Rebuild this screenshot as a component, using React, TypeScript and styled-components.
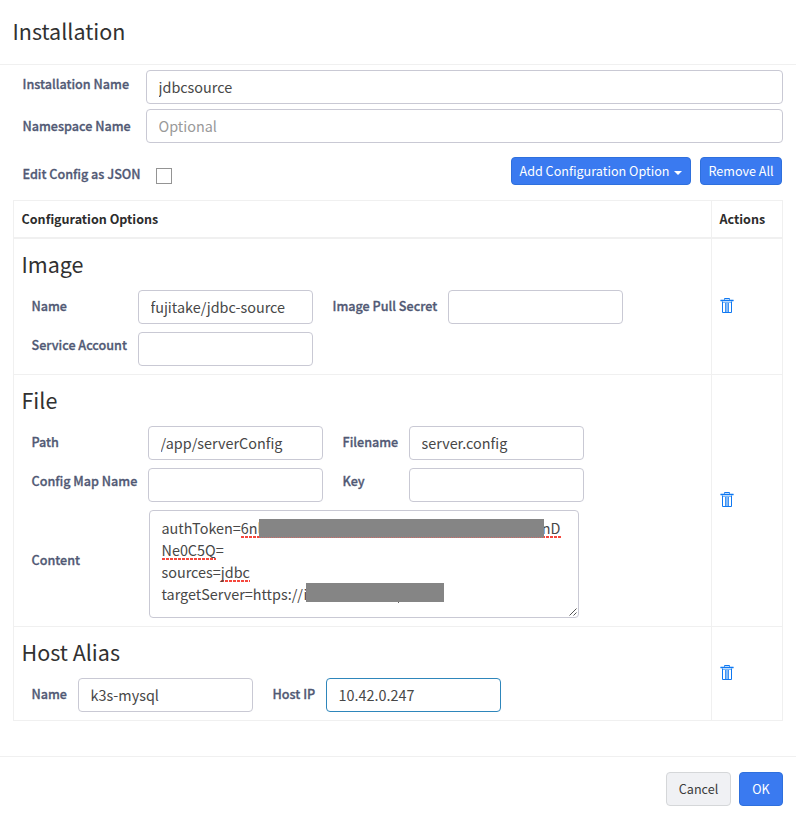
import React from "react";
import styled, { createGlobalStyle } from "styled-components";

const GlobalStyle = createGlobalStyle`
  * { box-sizing: border-box; }
  body {
    margin: 0;
    background: #fff;
    color: #313131;
    font-family: "Noto Sans CJK SC", "Noto Sans", sans-serif;
    font-size: 14.4px;
  }
`;

const Dialog = styled.main`
  width: 796px;
  height: 820px;
  display: flex;
  flex-direction: column;
  overflow: hidden;
`;

const Header = styled.header`
  height: 65px;
  padding: 13px 12.5px 0;
  border-bottom: 1px solid #f0f0f0;
`;

const Title = styled.h4`
  margin: 0;
  font-size: 21.5px;
  font-weight: 400;
  line-height: 36px;
`;

const Body = styled.section`
  height: 691px;
  padding: 5px 13px 0;
`;

const Field = styled.div`
  display: grid;
  grid-template-columns: 133px 1fr;
  height: 34px;
  margin-bottom: 5px;
`;

const Label = styled.label<{ $lift?: number }>`
  padding-left: 9.5px;
  padding-bottom: ${(p) => (p.$lift ?? 1) * 2}px;
  align-self: center;
  font-size: 12.6px;
  font-weight: 500;
  -webkit-text-stroke: 0.3px #515974;
  line-height: 20px;
  color: #515974;
  white-space: nowrap;
`;

const Input = styled.input<{ $active?: boolean }>`
  width: 100%;
  min-width: 0;
  height: 34px;
  padding: 0 11.5px 1px;
  border: 1px solid ${(p) => (p.$active ? "#2e86bb" : "#c9c9d4")};
  border-radius: 4px;
  outline: none;
  background: #fff;
  color: #474747;
  font: inherit;
  &::placeholder { color: #999; opacity: 1; }
`;

const Toolbar = styled.div`
  display: flex;
  align-items: flex-start;
  height: 43px;
  margin-top: 14px;
`;

const CheckLabel = styled(Label)`
  width: 143px;
  align-self: flex-start;
  margin-top: 7px;
`;

const Checkbox = styled.input`
  appearance: none;
  width: 16px;
  height: 16px;
  margin: 11px auto 0 0;
  border: 1px solid #949494;
  background: #fff;
`;

const Button = styled.button<{ $kind?: "small" | "plain" }>`
  display: flex;
  align-items: center;
  justify-content: center;
  height: ${(p) => (p.$kind === "small" ? 28 : 34)}px;
  padding: 0 0 2px;
  border: 1px solid ${(p) => (p.$kind === "plain" ? "#d5d7d9" : "#2f70dd")};
  border-radius: 4px;
  background: ${(p) => (p.$kind === "plain" ? "#f0f1f4" : "#3a7af0")};
  color: ${(p) => (p.$kind === "plain" ? "#3a3a3a" : "#fff")};
  font: inherit;
  font-size: 12.6px;
  white-space: nowrap;
`;

const AddButton = styled(Button)`
  width: 180px;
  margin-right: 9px;
`;
const RemoveButton = styled(Button)`
  width: 82px;
  margin-right: 1px;
`;

const Caret = styled.span`
  margin: 5px 0 0 5px;
  border: 4px solid transparent;
  border-top-color: #fff;
  border-bottom: 0;
`;

const Table = styled.div`
  border: 1px solid #f0f0f0;
`;

const Row = styled.div<{ $head?: boolean }>`
  display: grid;
  grid-template-columns: 697px 1fr;
  border-bottom: ${(p) => (p.$head ? 2 : 1)}px solid #f0f0f0;
  &:last-child { border-bottom: 0; }
`;

const HeadCell = styled.div`
  height: 36px;
  padding: 0 7.5px;
  font-size: 12.55px;
  font-weight: 700;
  line-height: 36px;
  color: #2c2c2c;
  & + & { border-left: 1px solid #f0f0f0; }
`;

const OptionCell = styled.div`
  padding: 8px;
`;

const ActionCell = styled.div`
  display: flex;
  align-items: center;
  padding: 0 0 3px 8px;
  border-left: 1px solid #f0f0f0;
`;

const IconButton = styled.button`
  display: flex;
  padding: 0;
  border: 0;
  background: none;
`;

const OptionTitle = styled(Title)`
  height: 44px;
  margin: -1px 0 0 -0.5px;
`;

const Form = styled.div<{ $columns: string }>`
  display: grid;
  grid-template-columns: ${(p) => p.$columns};
  row-gap: 8px;
`;

const NextLabel = styled(Label)`
  padding-left: 19.5px;
`;

const TextBox = styled.div`
  position: relative;
  grid-column: 2 / -1;
  width: 430px;
  height: 108px;
  margin-left: 1px;
  padding: 6px 11.5px;
  border: 1px solid #c9c9d4;
  border-radius: 4px;
  line-height: 22px;
  color: #474747;
`;

const Line = styled.div`
  display: flex;
  white-space: nowrap;
`;

const Misspelt = styled.span`
  height: 21px;
  background: radial-gradient(circle at 1.5px 1px, #f5473d 1.2px, transparent 1.9px) 0 100% / 4px 2px repeat-x;
`;

const LineEnd = styled(Misspelt)`
  margin-left: auto;
  margin-right: 6px;
`;

const Redaction = styled.span<{ $x: number; $y: number; $w: number; $marked?: boolean }>`
  position: absolute;
  left: ${(p) => p.$x}px;
  top: ${(p) => p.$y}px;
  width: ${(p) => p.$w}px;
  height: 19px;
  background: #858585;
  border-bottom: ${(p) => (p.$marked ? "1px dotted #d06f6b" : "0")};
`;

const Descender = styled.span`
  position: absolute;
  left: 248px;
  top: 91px;
  width: 1px;
  height: 1px;
  background: #666;
`;

const Grip = styled.svg`
  position: absolute;
  right: 1px;
  bottom: 1px;
`;

const Footer = styled.footer`
  display: flex;
  justify-content: flex-end;
  gap: 8px;
  height: 64px;
  padding: 15px 13px 0;
  border-top: 1px solid #f0f0f0;
`;
const CancelButton = styled(Button)`
  width: 65px;
`;
const OkButton = styled(Button)`
  width: 44px;
`;

function Trash() {
  return (
    <IconButton aria-label="Remove">
      <svg width="14" height="16" viewBox="0 0 14 16" fill="none" stroke="#0f78f2">
        <path d="M4.5 3V1.5H9.5V3" />
        <path d="M0.5 3.5H13.5" stroke="#7db8f9" strokeWidth="2" />
        <path d="M0.5 3.5H13.5" />
        <path d="M2.5 4.5V15.5H11.5V4.5" />
        <path d="M3 5.5H11" stroke="#7db8f9" />
        <path d="M7 6V15" stroke="#86bcf8" strokeWidth="4" />
        <path d="M5.5 6V15M8.5 6V15" stroke="#3f93f5" />
      </svg>
    </IconButton>
  );
}

interface OptionProps {
  title: string;
  columns: string;
  children: React.ReactNode;
}

function Option({ title, columns, children }: OptionProps) {
  return (
    <Row>
      <OptionCell>
        <OptionTitle>{title}</OptionTitle>
        <Form $columns={columns}>{children}</Form>
      </OptionCell>
      <ActionCell><Trash /></ActionCell>
    </Row>
  );
}

export default function App() {
  return (
    <>
      <GlobalStyle />
      <Dialog>
        <Header><Title>Installation</Title></Header>
        <Body>
          <Field>
            <Label $lift={3}>Installation Name</Label>
            <Input defaultValue="jdbcsource" />
          </Field>
          <Field>
            <Label $lift={0}>Namespace Name</Label>
            <Input placeholder="Optional" />
          </Field>
          <Toolbar>
            <CheckLabel>Edit Config as JSON</CheckLabel>
            <Checkbox type="checkbox" />
            <AddButton $kind="small">Add Configuration Option<Caret /></AddButton>
            <RemoveButton $kind="small">Remove All</RemoveButton>
          </Toolbar>
          <Table>
            <Row $head>
              <HeadCell>Configuration Options</HeadCell>
              <HeadCell>Actions</HeadCell>
            </Row>
            <Option title="Image" columns="116px 175px 135px 175px">
              <Label>Name</Label>
              <Input defaultValue="fujitake/jdbc-source" />
              <NextLabel>Image Pull Secret</NextLabel>
              <Input />
              <Label $lift={4}>Service Account</Label>
              <Input />
            </Option>
            <Option title="File" columns="126px 175px 86px 175px">
              <Label>Path</Label>
              <Input defaultValue="/app/serverConfig" />
              <NextLabel>Filename</NextLabel>
              <Input defaultValue="server.config" />
              <Label $lift={4}>Config Map Name</Label>
              <Input />
              <NextLabel $lift={4}>Key</NextLabel>
              <Input />
              <Label $lift={4}>Content</Label>
              <TextBox>
                <Line>authToken=<Misspelt>6nl</Misspelt><LineEnd>nD</LineEnd></Line>
                <Line><Misspelt>Ne0C5Q</Misspelt>=</Line>
                <Line>sources=<Misspelt>jdbc</Misspelt></Line>
                <Line>targetServer=https://i</Line>
                <Redaction $x={109} $y={8} $w={285} $marked />
                <Redaction $x={156} $y={72} $w={138} />
                <Descender />
                <Grip width="8" height="8" viewBox="0 0 8 8" stroke="#555" fill="none">
                  <path d="M0.5 7.5L7.5 0.5M4.5 7.5L7.5 4.5" />
                </Grip>
              </TextBox>
            </Option>
            <Option title="Host Alias" columns="56px 175px 73px 175px">
              <Label>Name</Label>
              <Input defaultValue="k3s-mysql" />
              <NextLabel>Host IP</NextLabel>
              <Input $active defaultValue="10.42.0.247" />
            </Option>
          </Table>
        </Body>
        <Footer>
          <CancelButton $kind="plain">Cancel</CancelButton>
          <OkButton>OK</OkButton>
        </Footer>
      </Dialog>
    </>
  );
}
